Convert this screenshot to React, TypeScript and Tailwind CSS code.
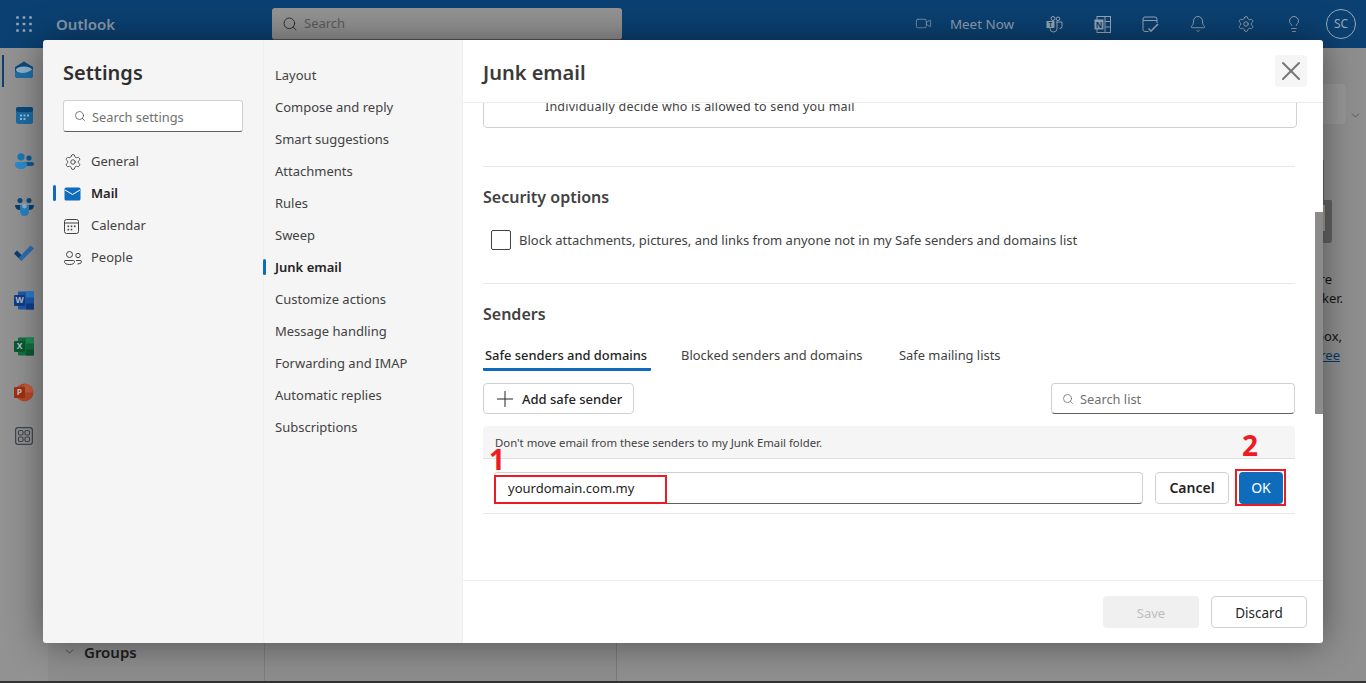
import React from "react";
import { Search, Settings, Bell, Lightbulb, ChevronDown, X, Video } from "lucide-react";

const font = "font-['Noto_Sans','Open_Sans',sans-serif]";

function Waffle() {
  const pts = [0, 1, 2];
  return (
    <svg width="16" height="16" viewBox="0 0 16 16" fill="#95a6b6">
      {pts.map((r) => pts.map((c) => <rect key={`${r}${c}`} x={c * 6.5 + 0.2} y={r * 6.5 + 0.2} width="2.6" height="2.6" rx="0.6" />))}
    </svg>
  );
}

function RailMail() {
  return (
    <svg width="20" height="18" viewBox="0 0 20 18">
      <path d="M1 6 L10 0.5 L19 6 V14 Q19 17 16 17 H4 Q1 17 1 14 Z" fill="#0b4a7c" />
      <ellipse cx="10" cy="9" rx="8" ry="3.4" fill="#8fb0c8" />
      <path d="M1 10 Q10 15 19 8 V14 Q19 17 16 17 H4 Q1 17 1 14 Z" fill="#1d6fa5" />
    </svg>
  );
}
function RailCal() {
  return (
    <svg width="17" height="17" viewBox="0 0 17 17">
      <rect width="17" height="17" rx="2.5" fill="#1b6ca3" />
      <rect width="17" height="5" rx="2" fill="#0b4a7c" />
      <g fill="#9cc0d8">
        <rect x="4" y="7.5" width="2" height="2" /><rect x="7.5" y="7.5" width="2" height="2" /><rect x="11" y="7.5" width="2" height="2" />
        <rect x="4" y="11" width="2" height="2" /><rect x="7.5" y="11" width="2" height="2" />
      </g>
    </svg>
  );
}
function RailPeople() {
  return (
    <svg width="19" height="16" viewBox="0 0 19 16">
      <circle cx="14" cy="5" r="2.6" fill="#0b5a94" />
      <rect x="9" y="9" width="10" height="4" rx="2" fill="#0b5a94" />
      <circle cx="6" cy="3.8" r="3.6" fill="#1b78b8" />
      <path d="M0 11 Q0 9 2 9 H10 Q12 9 12 11 Q12 16 6 16 Q0 16 0 11 Z" fill="#2a8ccb" />
    </svg>
  );
}
function RailGroups() {
  return (
    <svg width="19" height="18" viewBox="0 0 19 18">
      <circle cx="5" cy="2.6" r="2.5" fill="#0b4a7c" />
      <circle cx="14" cy="2.6" r="2.5" fill="#0b4a7c" />
      <path d="M0 7 H19 Q19 12 14 12 H5 Q0 12 0 7 Z" fill="#0b3f6e" />
      <path d="M5 7 H14 V13 Q14 18 9.5 18 Q5 18 5 13 Z" fill="#2a82c0" />
      <circle cx="9.5" cy="8" r="2.4" fill="#8fb0c8" />
    </svg>
  );
}
function RailTodo() {
  return (
    <svg width="20" height="16" viewBox="0 0 20 16">
      <path d="M0 8.5 L3 5.5 L7.5 10 L7.5 16 Z" fill="#0b3f6e" />
      <path d="M7.5 16 L4.5 13 L16.5 0.5 L20 3.5 Z" fill="#2a6db5" />
    </svg>
  );
}
function OfficeIcon({ letter, c1, c2, c3, round }: { letter: string; c1: string; c2: string; c3: string; round?: boolean }) {
  return (
    <svg width="20" height="19" viewBox="0 0 20 19">
      {round ? (
        <>
          <circle cx="10.5" cy="9.5" r="9" fill={c2} />
          <path d="M10.5 0.5 A9 9 0 0 1 19.5 9.5 H10.5 Z" fill={c3} />
        </>
      ) : (
        <>
          <rect x="4" y="0.5" width="16" height="18" rx="1" fill={c2} />
          <rect x="12" y="0.5" width="8" height="6" fill={c3} />
          <rect x="12" y="12.5" width="8" height="6" fill={c1} />
        </>
      )}
      <rect x="0" y="4" width="11" height="11" rx="1" fill={c1} />
      <text x="5.5" y="12.4" textAnchor="middle" fontSize="8.5" fontWeight="700" fill="#b9c0c8">{letter}</text>
    </svg>
  );
}
function RailApps() {
  return (
    <svg width="18" height="18" viewBox="0 0 18 18" fill="none" stroke="#3d4650" strokeWidth="1.2">
      <rect x="0.6" y="0.6" width="16.8" height="16.8" rx="2.5" strokeWidth="1.3" />
      <rect x="3.5" y="3.5" width="4.5" height="4.5" rx="1.2" />
      <rect x="10" y="3.5" width="4.5" height="4.5" rx="1.2" />
      <rect x="3.5" y="10" width="4.5" height="4.5" rx="1.2" />
      <rect x="10" y="10" width="4.5" height="4.5" rx="1.2" />
    </svg>
  );
}

function TopTeams() {
  return (
    <svg width="17" height="17" viewBox="0 0 17 17" fill="none" stroke="#98a8b6" strokeWidth="1">
      <circle cx="12" cy="2.8" r="1.8" /><circle cx="7" cy="2.5" r="2" />
      <path d="M10 6 H16 V10.5 Q16 12.5 13.5 12.5" />
      <path d="M4 8 V12.5 Q4 16 7.5 16 Q11 16 11 12.5 V6" />
      <rect x="0.5" y="5" width="8" height="7" fill="#98a8b6" stroke="none" />
      <text x="4.5" y="10.8" textAnchor="middle" fontSize="6.5" fontWeight="700" fill="#0b4172" stroke="none">T</text>
    </svg>
  );
}
function TopNote() {
  return (
    <svg width="17" height="17" viewBox="0 0 17 17" fill="none" stroke="#98a8b6" strokeWidth="1">
      <rect x="3" y="0.5" width="13.5" height="16" />
      <path d="M11 0.5 V16.5 M11 5.5 H16.5 M11 11 H16.5" />
      <rect x="0.5" y="3.5" width="9" height="10" fill="#98a8b6" stroke="none" />
      <text x="5" y="11.5" textAnchor="middle" fontSize="8" fontWeight="700" fill="#0b4172" stroke="none">N</text>
    </svg>
  );
}
function TopTask() {
  return (
    <svg width="17" height="17" viewBox="0 0 17 17" fill="none" stroke="#98a8b6" strokeWidth="1">
      <path d="M6.5 15.5 H3 Q1 15.5 1 13.5 V3 Q1 1 3 1 H13 Q15 1 15 3 V7" />
      <path d="M1 4.5 H15" />
      <path d="M6.5 12.5 L9 15 L16 8" strokeWidth="1.6" />
    </svg>
  );
}

function GearIcon({ size, color }: { size: number; color: string }) {
  return <Settings size={size} color={color} strokeWidth={1.2} />;
}

const mainNav = ["Layout", "Compose and reply", "Smart suggestions", "Attachments", "Rules", "Sweep", "Junk email", "Customize actions", "Message handling", "Forwarding and IMAP", "Automatic replies", "Subscriptions"];

function TopBar() {
  const icons = [
    <TopTeams key="t" />,
    <TopNote key="n" />,
    <TopTask key="k" />,
    <Bell key="b" size={18} color="#98a8b6" strokeWidth={1.2} />,
    <GearIcon key="g" size={18} color="#98a8b6" />,
    <Lightbulb key="l" size={18} color="#98a8b6" strokeWidth={1.2} />,
  ];
  return (
    <header className="h-12 bg-[#0b4172] flex items-center shrink-0">
      <div className="w-[56px] pl-4 shrink-0"><Waffle /></div>
      <div className="w-[216px] shrink-0 text-[15px] font-semibold text-[#8b9cad]">Outlook</div>
      <div className="w-[350px] h-8 shrink-0 bg-[#939393] rounded-[3px] border-b border-[#555] flex items-center pl-[10px] gap-[6px]">
        <Search size={16} color="#2b2b2b" strokeWidth={1.4} />
        <span className="text-[13px] text-[#5c5c5c]">Search</span>
      </div>
      <div className="flex-1 flex items-center justify-end pr-[10px]">
        <div className="flex items-center gap-[18px] mr-[31px]">
          <Video size={17} color="#98a8b6" strokeWidth={1} />
          <span className="text-[13.4px] text-[#8fa0b0]">Meet Now</span>
        </div>
        <div className="flex items-center gap-[30px] mr-[23px]">
          {icons.map((ic) => (
            <span key={ic.key} className="w-[18px] flex justify-center">{ic}</span>
          ))}
        </div>
        <div className="w-[30px] h-[30px] rounded-full border border-[#98a8b6] flex items-center justify-center text-[12px] text-[#98a8b6]">SC</div>
      </div>
    </header>
  );
}

function Rail() {
  return (
    <div className="w-[48px] shrink-0 relative flex flex-col items-center pt-[13px] bg-[#929292]">
      <div className="absolute left-[2px] top-[7px] w-[2px] h-[32px] bg-[#0b4172]" />
      <div className="h-[46px] flex flex-col items-center"><RailMail /></div>
      <div className="h-[46px]"><RailCal /></div>
      <div className="h-[45px]"><RailPeople /></div>
      <div className="h-[47px]"><RailGroups /></div>
      <div className="h-[46px]"><RailTodo /></div>
      <div className="h-[46px]"><OfficeIcon letter="W" c1="#0f3c88" c2="#1c5aa8" c3="#2b7ad0" /></div>
      <div className="h-[46px]"><OfficeIcon letter="X" c1="#0a5a30" c2="#107040" c3="#1f8a55" /></div>
      <div className="h-[44px]"><OfficeIcon letter="P" c1="#a1300f" c2="#b4492a" c3="#c65b3c" round /></div>
      <div className="h-[44px]"><RailApps /></div>
    </div>
  );
}

function Background() {
  return (
    <div className="flex-1 flex min-h-0 bg-[#8f8f8f]">
      <Rail />
      <div className="w-[217px] shrink-0 border-r border-[#7d7d7d] flex flex-col justify-end pb-[18px] pl-[15px] bg-[#8d8d8d]">
        <div className="flex items-center gap-[8px] text-[15px] font-semibold text-[#1d1d1d]">
          <ChevronDown size={13} color="#2a3a4a" strokeWidth={1.4} />
          <span>Groups</span>
        </div>
      </div>
      <div className="w-[352px] shrink-0 border-r border-[#7a7a7a] bg-[#8d8d8d]" />
      <div className="flex-1 flex flex-col items-end pt-[36px] bg-[#8f8f8f]">
        <div className="flex items-center gap-[3px] pr-[4px]">
          <div className="w-[60px] h-[40px] rounded-[4px] bg-[#979797]" />
          <ChevronDown size={13} color="#3a3a3a" strokeWidth={1.2} className="mt-[23px]" />
        </div>
        <svg width="40" height="84" viewBox="0 0 40 84" className="mt-[36px] mr-[34px]">
          <path d="M0 0 H32 V40 H39 Q40 40 40 42 V80 Q40 83 37 83 H0 Z" fill="#646464" />
          <rect x="30" y="45" width="3" height="26" fill="#a19a92" />
        </svg>
        <div className="mt-[26px] text-[13px] leading-[19px] text-[#151515] text-right w-full">
          <div className="pr-[34px]">are</div>
          <div className="pr-[23px]">picker.</div>
          <div className="h-[19px]" />
          <div className="pr-[24px]">inbox,</div>
          <div className="pr-[26px] text-[#0a3a6a] underline">free</div>
        </div>
      </div>
    </div>
  );
}

function LeftColumn() {
  const items = [
    { label: "General", icon: <GearIcon size={18} color="#424242" /> },
    {
      label: "Mail",
      active: true,
      icon: (
        <svg width="17" height="14" viewBox="0 0 17 14">
          <rect width="16" height="13" x="0.5" y="0.5" rx="1.5" fill="#0f6cbd" />
          <path d="M1 3 L8.5 7.5 L16 3" fill="none" stroke="#fff" strokeWidth="1" />
        </svg>
      ),
    },
    {
      label: "Calendar",
      icon: (
        <svg width="15" height="15" viewBox="0 0 15 15" fill="none" stroke="#424242" strokeWidth="1">
          <rect x="0.5" y="0.5" width="14" height="14" rx="2" />
          <path d="M0.5 4 H14.5" />
          <g fill="#424242" stroke="none">
            <rect x="3.5" y="6.5" width="1.6" height="1.6" /><rect x="6.7" y="6.5" width="1.6" height="1.6" /><rect x="9.9" y="6.5" width="1.6" height="1.6" />
            <rect x="3.5" y="9.8" width="1.6" height="1.6" /><rect x="6.7" y="9.8" width="1.6" height="1.6" />
          </g>
        </svg>
      ),
    },
    {
      label: "People",
      icon: (
        <svg width="18" height="14" viewBox="0 0 18 14" fill="none" stroke="#424242" strokeWidth="1">
          <circle cx="5.5" cy="3.5" r="3" /><circle cx="14" cy="4.5" r="2.2" />
          <path d="M1 9.5 H9.5 Q10.5 9.5 10.5 10.5 Q10.5 13.5 5.5 13.5 Q0.5 13.5 0.5 10.5 Q0.5 9.5 1 9.5 Z" />
          <path d="M12 9.5 H16 Q17.5 9.5 17.5 10.8 Q17.5 13 13.5 13" />
        </svg>
      ),
    },
  ];
  return (
    <div className="w-[220px] shrink-0 bg-[#f5f5f5] pl-[20px] pr-[20px] pt-[20px]">
      <h1 className="text-[20px] leading-[26px] font-semibold text-[#2f2f2f]">Settings</h1>
      <div className="mt-[14px] h-8 bg-white rounded-[3px] border border-[#d1d1d1] border-b-[#616161] flex items-center pl-[10px] gap-[6px]">
        <Search size={12} color="#424242" strokeWidth={1.4} />
        <span className="text-[12.8px] pt-[3px] text-[#707070]">Search settings</span>
      </div>
      <ul className="mt-[14px]">
        {items.map((it) => (
          <li key={it.label} className="relative h-8 flex items-center">
            {it.active && <span className="absolute -left-[10px] top-[7px] w-[3px] h-[16px] rounded-sm bg-[#0f6cbd]" />}
            <span className="w-[28px] pl-[1px] flex items-center">{it.icon}</span>
            <span className={`text-[13px] ${it.active ? "font-semibold text-[#242424]" : "text-[#424242]"}`}>{it.label}</span>
          </li>
        ))}
      </ul>
    </div>
  );
}

function MiddleColumn() {
  return (
    <div className="w-[200px] shrink-0 bg-[#f5f5f5] border-l border-r border-[#efefef] pt-[20px] pl-[11px]">
      <ul>
        {mainNav.map((n) => (
          <li key={n} className="relative h-8 flex items-center">
            {n === "Junk email" && <span className="absolute -left-[12px] top-[7px] w-[3px] h-[16px] rounded-sm bg-[#0f6cbd]" />}
            <span className={`text-[13px] ${n === "Junk email" ? "font-semibold text-[#242424]" : "text-[#424242]"}`}>{n}</span>
          </li>
        ))}
      </ul>
    </div>
  );
}

function Content() {
  return (
    <div className="flex-1 min-h-0 relative overflow-hidden pl-[20px] pr-[28px]">
      <div className="absolute right-0 top-[109px] w-[8px] h-[202px] bg-[#8b8b8b]" />
      <div className="-mt-[16px] h-[41px] w-[814px] border border-[#d1d1d1] rounded-[4px] pl-[61px] pt-[9px] text-[12.5px] leading-[20px] tracking-[0.2px] text-[#424242]">
        Individually decide who is allowed to send you mail
      </div>
      <div className="mt-[38px] border-t border-[#e8e8e8]" />
      <h2 className="mt-[19px] text-[16px] leading-[22px] font-semibold text-[#424242]">Security options</h2>
      <label className="mt-[22px] ml-[8px] flex items-center gap-2">
        <span className="w-5 h-5 shrink-0 rounded-[2px] border border-[#424242] bg-white" />
        <span className="h-5 text-[13px] leading-[21px] text-[#424242]">Block attachments, pictures, and links from anyone not in my Safe senders and domains list</span>
      </label>
      <div className="mt-[33px] border-t border-[#e8e8e8]" />
      <h2 className="mt-[19px] text-[16px] leading-[22px] font-semibold text-[#424242]">Senders</h2>
      <div className="mt-[19px] flex text-[12.9px] text-[#424242] h-[27px]">
        <div className="w-[168px] pl-[2px] border-b-[3px] border-[#0f6cbd] rounded-b-[1px] font-medium text-[#242424] leading-[18px] pt-[2px]">Safe senders and domains</div>
        <div className="ml-[30px] w-[218px] leading-[18px] pt-[2px]">Blocked senders and domains</div>
        <div className="leading-[18px] pt-[2px]">Safe mailing lists</div>
      </div>
      <div className="mt-[12px] flex justify-between">
        <button className="w-[151px] h-[31px] rounded-[4px] border border-[#d1d1d1] bg-white flex items-center pl-[12px] gap-[8px] text-[13px] font-medium text-[#242424]">
          <svg width="18" height="18" viewBox="0 0 18 18" fill="none" stroke="#242424" strokeWidth="1">
            <path d="M9 1 V17 M1 9 H17" />
          </svg>
          <span className="pt-[3px]">Add safe sender</span>
        </button>
        <div className="w-[244px] h-[31px] rounded-[4px] border border-[#d1d1d1] border-b-[#616161] flex items-center pl-[10px] gap-[6px]">
          <Search size={12} color="#616161" strokeWidth={1.4} />
          <span className="text-[12.8px] pt-[3px] text-[#707070]">Search list</span>
        </div>
      </div>
      <div className="mt-[12px] h-[33px] bg-[#f5f5f5] rounded-t-[4px] border-b border-[#e0e0e0] pl-[12px] pt-[2px] flex items-center text-[11.35px] text-[#424242]">
        Don't move email from these senders to my Junk Email folder.
      </div>
      <div className="h-[55px] border-b border-[#e8e8e8] flex items-center pl-[11px] pt-[3px] relative">
        <div className="w-[649px] h-[32px] rounded-[4px] border border-[#d1d1d1] border-b-[#616161] flex items-center pl-[13px] pt-[2px] text-[13px] text-[#242424]">yourdomain.com.my</div>
        <button className="ml-[12px] w-[74px] h-[32px] rounded-[4px] border border-[#d1d1d1] bg-white text-[14px] font-semibold text-[#242424]">Cancel</button>
        <button className="ml-[10px] w-[44px] h-[32px] rounded-[4px] bg-[#0f6cbd] text-[14px] text-white">OK</button>
        <div className="absolute left-[11px] top-[16px] w-[173px] h-[29px] border-2 border-[#ed1c24]" />
        <div className="absolute left-[752px] top-[10px] w-[51px] h-[37px] border-2 border-[#ed1c24]" />
        <span className="absolute left-[6px] -top-[18px] text-[28px] leading-[36px] font-bold text-[#ed1c24]">1</span>
        <span className="absolute left-[759px] -top-[32px] text-[28px] leading-[36px] font-bold text-[#ed1c24]">2</span>
      </div>
    </div>
  );
}

function RightColumn() {
  return (
    <div className="flex-1 min-w-0 flex flex-col bg-white">
      <div className="h-[63px] shrink-0 border-b border-[#ececec] flex items-center justify-between pl-[20px] pr-[16px]">
        <h1 className="text-[20px] pt-[4px] font-semibold text-[#3a3a3a]">Junk email</h1>
        <button className="w-8 h-8 rounded-[4px] bg-[#f5f5f5] flex items-center justify-center">
          <X size={34} color="#767676" strokeWidth={1.5} />
        </button>
      </div>
      <Content />
      <div className="h-[63px] shrink-0 border-t border-[#ececec] flex items-center justify-end gap-3 pr-[16px]">
        <button className="w-[96px] h-8 rounded-[4px] bg-[#f0f0f0] pt-[3px] text-[13px] text-[#bdbdbd]">Save</button>
        <button className="w-[96px] h-8 rounded-[4px] border border-[#d1d1d1] bg-white pt-[3px] text-[13.5px] text-[#242424]">Discard</button>
      </div>
    </div>
  );
}

export default function App() {
  return (
    <div className={`relative w-[1366px] h-[683px] overflow-hidden flex flex-col ${font}`}>
      <TopBar />
      <Background />
      <div className="h-[2px] shrink-0 bg-[#333]" />
      <div className="absolute left-[43px] top-[40px] w-[1280px] h-[603px] flex rounded-[3px] overflow-hidden shadow-[0_0_36px_rgba(0,0,0,0.45)]">
        <LeftColumn />
        <MiddleColumn />
        <RightColumn />
      </div>
    </div>
  );
}
